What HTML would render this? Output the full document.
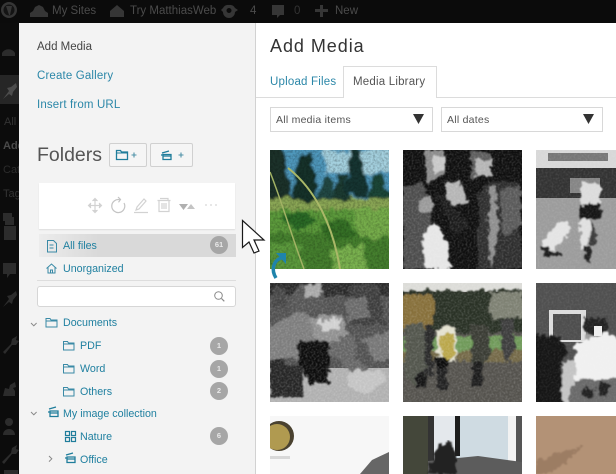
<!DOCTYPE html>
<html><head><meta charset="utf-8">
<style>
html,body{margin:0;padding:0;width:616px;height:474px;overflow:hidden;background:#fff}
body{position:relative;font-family:"Liberation Sans",sans-serif;font-size:11.5px;color:#0e7a9c}
.a{position:absolute;white-space:nowrap;line-height:14px}
.g{color:#444}
.l{font-size:10.7px;color:#2080a0}
.b{position:absolute;left:210px;width:18px;height:18px;border-radius:50%;background:#a6a6a6;color:#e8e8e8;font-size:7.5px;font-weight:bold;line-height:18px;text-align:center}
.d{color:#4c4c4c;font-size:11.5px}
svg{position:absolute;left:0;top:0}
</style></head><body>
<div style="position:absolute;left:0;top:0;width:616px;height:23px;background:#0b0b0b"></div>
<div style="position:absolute;left:0;top:23px;width:19px;height:451px;background:#0c0c0c"></div>
<div style="position:absolute;left:0;top:75px;width:19px;height:29px;background:#262626"></div>
<div style="position:absolute;left:19px;top:23px;width:236px;height:451px;background:#f3f3f3"></div>
<div style="position:absolute;left:255px;top:23px;width:1px;height:451px;background:#d2d2d2"></div>

<div class="a" style="left:52px;top:4px;color:#4b4b4b">My Sites</div>
<div class="a" style="left:130px;top:4px;color:#4b4b4b">Try MatthiasWeb</div>
<div class="a" style="left:250px;top:4px;color:#4b4b4b">4</div>
<div class="a" style="left:294px;top:4px;color:#333">0</div>
<div class="a" style="left:335px;top:4px;color:#4b4b4b">New</div>
<div class="a" style="left:4px;top:115px;color:#333;font-size:11px;width:15px;overflow:hidden">All</div>
<div class="a" style="left:3px;top:139px;color:#4a4a4a;font-size:11px;font-weight:bold;width:16px;overflow:hidden">Add</div>
<div class="a" style="left:3px;top:163px;color:#2c2c2c;font-size:11px;width:16px;overflow:hidden">Cat</div>
<div class="a" style="left:3px;top:187px;color:#333;font-size:11px;width:16px;overflow:hidden">Tag</div>

<div class="a g" style="left:37px;top:40px;width:auto">Add Media</div>
<div class="a" style="left:37px;top:69px;color:#2b87a8;letter-spacing:.15px">Create Gallery</div>
<div class="a" style="left:37px;top:98px;color:#2b87a8;letter-spacing:.15px">Insert from URL</div>
<div class="a" style="left:37px;top:144px;font-size:19.5px;line-height:22px;color:#555">Folders</div>

<div style="position:absolute;left:109px;top:143px;width:36px;height:22px;border:1px solid #d0d0d0;border-radius:2px;background:#f5f5f5"></div>
<div style="position:absolute;left:150px;top:143px;width:41px;height:22px;border:1px solid #d0d0d0;border-radius:2px;background:#f5f5f5"></div>
<div style="position:absolute;left:39px;top:183px;width:196px;height:46px;background:#fff;box-shadow:0 1px 1px #ddd"></div>
<div style="position:absolute;left:39px;top:234px;width:197px;height:23px;background:linear-gradient(90deg,#ececec 0,#d9d9d9 30%,#d9d9d9 100%)"></div>
<div style="position:absolute;left:37px;top:280px;width:199px;height:1px;background:#ddd"></div>
<div style="position:absolute;left:37px;top:286px;width:197px;height:19px;border:1px solid #d6d6d6;border-radius:3px;background:#fff"></div>

<div class="a l" style="left:63px;top:239px">All files</div>
<div class="a l" style="left:63px;top:262px">Unorganized</div>
<div class="a l" style="left:63px;top:316px">Documents</div>
<div class="a l" style="left:80px;top:339px">PDF</div>
<div class="a l" style="left:80px;top:362px">Word</div>
<div class="a l" style="left:80px;top:385px">Others</div>
<div class="a l" style="left:63px;top:407px">My image collection</div>
<div class="a l" style="left:80px;top:430px">Nature</div>
<div class="a l" style="left:80px;top:453px">Office</div>
<div class="b" style="top:236px">61</div>
<div class="b" style="top:337px">1</div>
<div class="b" style="top:360px">1</div>
<div class="b" style="top:382px">2</div>
<div class="b" style="top:427px">6</div>

<div class="a" style="left:270px;top:35px;font-size:18px;line-height:22px;color:#333;letter-spacing:.95px">Add Media</div>
<div style="position:absolute;left:256px;top:97px;width:360px;height:1px;background:#dcdcdc"></div>
<div style="position:absolute;left:343px;top:66px;width:94px;height:32px;background:#fff;border:1px solid #dcdcdc;border-bottom:none;box-sizing:border-box"></div>
<div class="a" style="left:270px;top:75px;color:#2b87a8;letter-spacing:.2px">Upload Files</div>
<div class="a" style="left:353px;top:75px;color:#555;letter-spacing:.2px">Media Library</div>
<div style="position:absolute;left:270px;top:107px;width:163px;height:25px;border:1px solid #d8d8d8;box-sizing:border-box"></div>
<div style="position:absolute;left:441px;top:107px;width:162px;height:25px;border:1px solid #d8d8d8;box-sizing:border-box"></div>
<div class="a d" style="left:276px;top:113px;font-size:10.5px;color:#555;letter-spacing:.25px">All media items</div>
<div class="a d" style="left:447px;top:113px;font-size:10.5px;color:#555;letter-spacing:.25px">All dates</div>

<svg width="616" height="474" viewBox="0 0 616 474" fill="none">
<defs>
<filter id="f1" x="-5%" y="-5%" width="110%" height="110%"><feTurbulence type="fractalNoise" baseFrequency=".16" numOctaves="3" seed="3" result="t"/><feDisplacementMap in="SourceGraphic" in2="t" scale="9" xChannelSelector="R" yChannelSelector="G"/><feGaussianBlur stdDeviation=".7"/></filter>
<filter id="f2" x="-5%" y="-5%" width="110%" height="110%"><feTurbulence type="fractalNoise" baseFrequency=".1" numOctaves="3" seed="6" result="t"/><feDisplacementMap in="SourceGraphic" in2="t" scale="12" xChannelSelector="R" yChannelSelector="G"/><feGaussianBlur stdDeviation="1"/></filter>
<filter id="n" x="0" y="0" width="100%" height="100%"><feTurbulence type="fractalNoise" baseFrequency=".45" numOctaves="2" seed="4"/><feColorMatrix values="0 0 0 0 0 0 0 0 0 0 0 0 0 0 0 1.8 0 0 0 -.65"/></filter>
<filter id="w" x="0" y="0" width="100%" height="100%"><feTurbulence type="fractalNoise" baseFrequency=".5" numOctaves="2" seed="9"/><feColorMatrix values="0 0 0 0 1 0 0 0 0 1 0 0 0 0 1 1.8 0 0 0 -.7"/></filter>
<clipPath id="c1"><rect x="270" y="150" width="119" height="119"/></clipPath>
<clipPath id="c2"><rect x="403" y="150" width="119" height="119"/></clipPath>
<clipPath id="c3"><rect x="536" y="150" width="80" height="119"/></clipPath>
<clipPath id="c4"><rect x="270" y="283" width="119" height="119"/></clipPath>
<clipPath id="c5"><rect x="403" y="283" width="119" height="119"/></clipPath>
<clipPath id="c6"><rect x="536" y="283" width="80" height="119"/></clipPath>
<clipPath id="c7"><rect x="270" y="416" width="119" height="58"/></clipPath>
<clipPath id="c8"><rect x="403" y="416" width="119" height="58"/></clipPath>
<clipPath id="c9"><rect x="536" y="416" width="80" height="58"/></clipPath>
</defs>

<!-- admin bar icons -->
<g fill="#363636">
<circle cx="9" cy="10" r="8"/><circle cx="9" cy="10" r="5.500" fill="#141414"/><path d="M6 6h6l-2 9h-1z"/>
<path d="M30 17v-4l3-2 2-4 4-2 4 2 2 4 3 2v4z"/>
<path d="M110 11l7-6 7 6v6h-14z"/>
<path d="M229 5a6 6 0 0 1 6 3l3 2-3 2a6 6 0 0 1-12 0l-2-2 2-2a6 6 0 0 1 6-3zm0 3a2.500 2.500 0 1 0 .01 0z" fill-rule="evenodd"/>
<path d="M272 5h12v10h-4l-3 3v-3h-5z"/>
<path d="M315 9h5V5h3v4h5v3h-5v5h-3v-5h-5z"/>
</g>
<g fill="#2c2c2c">
<path d="M2 53a7.500 7.500 0 0 1 13 0v3H2z"/>
<path d="M3 99l6-8-2-3 4-1 5-4 1 4-4 5-1 4-3-2z" fill="#4c4c4c"/>
<path d="M3 213h9v4h2v8H5v-4H3z"/>
<path d="M4 226h12v14H4z"/>
<path d="M3 263h13v11h-6l-3 4v-4H3z"/>
<path d="M3 307l6-8-2-3 4-1 5-4 1 4-4 5-1 4-3-2z"/>
<path d="M3 352l8-8 1-5 5-3-1 4 3 1-3 4h-4l-7 9z"/>
<path d="M3 396l2-8 4 1 1-4 5-3 1 5-3 1 2 3v5z"/>
<circle cx="9" cy="422" r="4"/><path d="M3 435c0-8 12-8 12 0z"/>
<path d="M2 462l9-9 1-5 5-3-1 4 3 1-3 4h-4l-8 10z"/>
<rect x="4" y="470" width="14" height="4"/>
</g>

<!-- Folder buttons icons -->
<g stroke="#1f7d9b" stroke-width="1.300">
<path d="M116.500 150.500h4l1 1.500h6v7.500h-11z"/><path d="M116.500 153h11" stroke-width="1"/>
<path d="M131.500 155h5M134 152.500v5" stroke-width="1.100" stroke="#4f92a8"/>
<path d="M162 153l7-2M161 155h2M163 154.500v5h8v-5z"/><path d="M163 156h8"/>
<path d="M178.500 155h5M181 152.500v5" stroke-width="1.100" stroke="#4f92a8"/>
</g>
<!-- toolbar icons -->
<g stroke="#d2d2d2" stroke-width="1.200">
<path d="M95 199v13M88.500 205.500h13"/>
<path d="M92.500 201l2.500-2.500 2.500 2.500M92.500 210l2.500 2.500 2.500-2.500M91 203l-2.500 2.500 2.500 2.500M99 203l2.500 2.500-2.500 2.500" fill="#d2d2d2"/>
<path d="M124 203a6.500 6.500 0 1 1-4-3.200" stroke="#c4c4c4"/><path d="M118 197l2.500 2.500-2 2.800" stroke="#c4c4c4"/>
<path d="M137 207l7-8 2 2-7 8-3 1zM134 212.500h14"/>
<path d="M157.500 200.500h13M160 198.500h8v2M159 200.500v11h10v-11M162 203v6M164 203v6M166 203v6"/>
</g>
<path d="M179 204h9l-4.500 6z" fill="#b0b0b0"/><path d="M187 209l4-5 4 5z" fill="#c4c4c4"/>
<g fill="#e0e0e0"><circle cx="206" cy="205" r="1"/><circle cx="211" cy="205" r="1"/><circle cx="216" cy="205" r="1"/></g>

<!-- list icons -->
<g stroke="#3a8aa6" stroke-width="1">
<path d="M47.500 240.500h6l3 3v8.500h-9z"/><path d="M49.500 245h4M49.500 248h4"/>
<path d="M46.500 268.500l5-4.500 5 4.500M48 267.500v5.500h7v-5.500M50.500 273v-3h2v3"/>
<path d="M31 323l2.800 2.800 2.800-2.800" stroke="#888"/>
<path d="M46 318.500h4l1 1.500h6v7h-11zM46 321h11"/>
<path d="M63.500 341.500h4l1 1.500h5.500v7h-10.500zM63.500 344h10.500"/>
<path d="M63.500 364.500h4l1 1.500h5.500v7h-10.500zM63.500 367h10.500"/>
<path d="M63.500 387.500h4l1 1.500h5.500v7h-10.500zM63.500 390h10.500"/>
<path d="M31 412l2.800 2.800 2.800-2.800" stroke="#888"/>
<path d="M49 409l7-2M48 412h2M50 411v5.500h8V411zM50 413h8" stroke-width="1.300" stroke="#1f7d9b"/>
<g stroke="#1f7d9b" stroke-width="1.200"><rect x="65.500" y="431.500" width="4" height="4"/><rect x="71.500" y="431.500" width="4" height="4"/><rect x="65.500" y="437.500" width="4" height="4"/><rect x="71.500" y="437.500" width="4" height="4"/></g>
<path d="M49 456l2.800 2.800-2.800 2.800" stroke="#888"/>
<path d="M66 455l7-2M65 458h2M67 457v5.500h8V457zM67 459h8" stroke-width="1.300" stroke="#1f7d9b"/>
</g>
<circle cx="218.500" cy="295.500" r="3.800" stroke="#8a8a8a" stroke-width="1"/><path d="M221.500 298.500l2.800 2.800" stroke="#8a8a8a" stroke-width="1.200"/>

<!-- select arrows -->
<path d="M413 114h11l-5.500 10z" fill="#333"/>
<path d="M583 114h11l-5.500 10z" fill="#333"/>

<!-- cursor -->
<path d="M242.500 220.500v27l6.500-5.500 5 11 5-2-5-11h10z" fill="#fff" stroke="#1a1a1a" stroke-width="1.200"/>

<!-- Photo 1 -->
<g clip-path="url(#c1)">
<rect x="270" y="150" width="119" height="119" fill="#5c9a3c"/>
<g filter="url(#f2)">
<rect x="260" y="140" width="140" height="58" fill="#4f98bc"/>
<rect x="325" y="150" width="70" height="22" fill="#a4d0de"/>
<rect x="260" y="198" width="140" height="12" fill="#8aa654"/>
<path d="M260 140h22l10 58h-32z" fill="#1d3229"/>
<path d="M292 200l7-48 12 0 8 48z" fill="#16302b"/>
<path d="M318 200l6-25 6 0 5 25z" fill="#234a45"/>
<path d="M332 200l7-26 6 0 6 26z" fill="#1a3a33"/>
<path d="M345 196l5-46 10 0 9 46z" fill="#143430"/>
<path d="M368 198l6-24 6 0 10 24z" fill="#1f4639"/>
<rect x="260" y="232" width="140" height="50" fill="#447f2e"/>
<path d="M282 215l22-4 14 12-22 8z" fill="#2c6a26"/>
<path d="M320 224l24-6 12 16-26 8z" fill="#356f28"/>
<path d="M350 208l40 0 4 30-34 0z" fill="#76ad4c"/>
<path d="M270 240l30 4 6 30-36 0z" fill="#5b9a3c"/>
<path d="M330 250l34-6 6 30-36 0z" fill="#7ab250"/>
</g>
<rect x="270" y="150" width="119" height="119" filter="url(#n)" opacity=".28"/>
<path d="M288 168c28 22 45 58 52 101" stroke="#aab868" stroke-width="2"/>
<path d="M270 172c12 30 22 65 34 97" stroke="#a2b264" stroke-width="1.500"/>
</g>
<path d="M276 278c-5-8-3-17 5-20" stroke="#1f84ab" stroke-width="3.500"/><path d="M276 253h10v11z" fill="#1f84ab"/>

<!-- Photo 2 -->
<g clip-path="url(#c2)">
<rect x="403" y="150" width="119" height="119" fill="#0f0f0f"/>
<g filter="url(#f1)">
<path d="M424 150h20l2 24-18 8z" fill="#8a8a8a"/>
<path d="M432 156l14 0 0 14-12 4z" fill="#c8c8c8"/>
<path d="M470 152h22l0 24-20 2z" fill="#5e5e5e"/>
<path d="M476 160h16v16h-16z" fill="#b5b5b5"/>
<path d="M403 186l20-4 8 36-6 51h-22z" fill="#4e4e4e"/>
<path d="M445 184l16-2 8 22-20 2z" fill="#b5b5b5"/>
<path d="M422 236l12-14 14 22 2 25h-24z" fill="#e6e6e6"/>
<path d="M478 196l10-14 32 0 2 87h-44z" fill="#2f2f2f"/>
<path d="M500 190l20-4 2 40-18 10z" fill="#5a5a5a"/>
<path d="M489 186l6 0 4 44-8 39-3-40z" fill="#8e8e8e"/>
<path d="M435 195l10 0 24 30-14 10z" fill="#1f1f1f"/>
<circle cx="427" cy="205" r="8" fill="#9a9a9a"/>
</g>
<rect x="403" y="150" width="119" height="119" filter="url(#w)" opacity=".2"/>
</g>

<!-- Photo 3 -->
<g clip-path="url(#c3)">
<rect x="536" y="150" width="80" height="119" fill="#9c9c9c"/>
<rect x="536" y="150" width="80" height="20" fill="#d8d8d8"/>
<rect x="548" y="153" width="60" height="8" fill="#777"/>
<rect x="536" y="168" width="80" height="30" fill="#333"/>
<rect x="570" y="178" width="30" height="15" fill="#858585"/>
<g filter="url(#f1)">
<path d="M540 245l20-24 8 2 2 12-20 18z" fill="#e4e4e4"/>
<path d="M579 205l22 0-1 14-21 0z" fill="#141414"/>
<path d="M582 183l18 0 0 22-20 0z" fill="#dcdcdc"/>
<path d="M580 220l10 0-3 30h-6z" fill="#e0e0e0"/>
<path d="M590 220l8 12-3 14-5-2z" fill="#3a3a3a"/>
<path d="M585 247l6 0 1 14h-7z" fill="#222"/>
<path d="M540 244l14 8 8 0 0 4-18 0z" fill="#1a1a1a"/>
</g>
<rect x="536" y="150" width="80" height="119" filter="url(#w)" opacity=".12"/>
</g>

<!-- Photo 4 -->
<g clip-path="url(#c4)">
<rect x="270" y="283" width="119" height="119" fill="#515151"/>
<rect x="270" y="368" width="119" height="34" fill="#b0b0b0"/>
<g filter="url(#f1)">
<rect x="262" y="280" width="135" height="16" fill="#2a2a2a"/>
<path d="M288 305l12-22 20 0 6 26-30 6z" fill="#555"/>
<path d="M305 284h16v12h-16z" fill="#a8a8a8"/>
<path d="M350 285l28 0 8 40-34 0z" fill="#3c3c3c"/>
<path d="M272 288h14v20h-14z" fill="#444"/>
<path d="M262 330l38-18 22 8 0 20-30 20-30 0z" fill="#7d7d7d"/>
<path d="M310 318l32-4 6 20-30 20z" fill="#909090"/>
<path d="M330 342l24-8 2 24 18 16-20 0-24-20z" fill="#666"/>
<path d="M298 340l30 0 2 44-20 0-12-20z" fill="#111"/>
<path d="M270 358l32 10 2 28-34 0z" fill="#252525"/>
<path d="M362 340l30-10 2 28-18 4z" fill="#767676"/>
<path d="M318 320l22-2 0 10-20 4z" fill="#d0d0d0"/>
<path d="M345 300l18-4 8 20-22 6z" fill="#6a6a6a"/>
<path d="M350 370l30 0 6 10-20 14-20-8z" fill="#c4c4c4"/>
</g>
<rect x="270" y="283" width="119" height="119" filter="url(#w)" opacity=".24"/>
</g>

<!-- Photo 5 -->
<g clip-path="url(#c5)">
<rect x="403" y="283" width="119" height="119" fill="#55534e"/>
<rect x="403" y="283" width="119" height="9" fill="#dcdcd8"/>
<g filter="url(#f1)">
<rect x="396" y="290" width="130" height="42" fill="#2a3028"/>
<rect x="398" y="295" width="35" height="36" fill="#87703a"/>
<rect x="490" y="292" width="34" height="26" fill="#7e8173"/>
<rect x="396" y="336" width="130" height="14" fill="#6f9a5a"/>
<rect x="396" y="350" width="130" height="12" fill="#756a48"/>
<path d="M405 325l14-3 8 12 0 50-14 0-8-10z" fill="#52564d"/>
<path d="M415 374l12 0 0 14-12 0z" fill="#151515"/>
<path d="M436 330l14-4 6 6 0 30-18 0z" fill="#e4e2d0"/>
<path d="M440 335l14-3 0 26-12 0z" fill="#baa74c"/>
<rect x="435" y="358" width="14" height="10" fill="#111"/>
<rect x="437" y="368" width="10" height="22" fill="#202020"/>
<path d="M470 325l18 0 4 30-8 8-12 0z" fill="#3a3e35"/>
<rect x="473" y="362" width="10" height="24" fill="#1c1c1c"/>
<path d="M500 320l14 0 0 30-6 14-6-12z" fill="#3e3e3e"/>
<rect x="425" y="325" width="8" height="50" fill="#2a2a2a"/>
</g>
<rect x="403" y="283" width="119" height="119" filter="url(#w)" opacity=".2"/>
</g>

<!-- Photo 6 -->
<g clip-path="url(#c6)">
<rect x="536" y="283" width="80" height="119" fill="#505050"/>
<rect x="549" y="310" width="37" height="32" fill="#ddd"/>
<rect x="553" y="314" width="28" height="26" fill="#4e4e4e"/>
<g filter="url(#f1)">
<path d="M532 335l28 2 8 18-8 8 2 42-30 0z" fill="#161616"/>
<path d="M562 362l22-4 6 46h-28z" fill="#c4c4c4"/>
<path d="M585 340c2-16 24-14 25 0l-2 10h-20z" fill="#a0a0a0"/>
<path d="M584 318h22v16h-22z" fill="#222"/>
<path d="M575 345l14-7 20-6 12 10v38h-46z" fill="#f0f0f0"/>
<path d="M575 380l46-2v28h-55z" fill="#6a6a6a"/>
<path d="M585 385l10 4-4 10-10-4zM600 380l10 6-4 12-10-6z" fill="#222"/>
</g>
<rect x="594" y="326" width="8" height="10" fill="#eee"/>
<rect x="536" y="283" width="80" height="119" filter="url(#w)" opacity=".1"/>
</g>

<!-- Photo 7 -->
<g clip-path="url(#c7)">
<rect x="270" y="416" width="119" height="58" fill="#f7f7f7"/>
<circle cx="279" cy="436" r="15" fill="#4a4230"/>
<circle cx="277" cy="437" r="13" fill="#b09a50"/>
<path d="M360 474l12-14 17-8v22z" fill="#666"/>
<path d="M270 456h20v3h-20z" fill="#d8d8d8"/>
</g>

<!-- Photo 8 -->
<g clip-path="url(#c8)">
<rect x="403" y="416" width="119" height="58" fill="#cfdbe2"/>
<rect x="428" y="416" width="6" height="45" fill="#333"/>
<rect x="434" y="416" width="21" height="45" fill="#e4e8ec"/>
<rect x="455" y="416" width="5" height="40" fill="#1d1d1d"/>
<rect x="508" y="416" width="8" height="45" fill="#f2f2f2"/>
<rect x="516" y="416" width="6" height="58" fill="#555"/>
<rect x="403" y="416" width="25" height="58" fill="#44473a"/>
<path d="M428 461l50-5 44 6v12h-94z" fill="#5c5c5c"/>
<path d="M428 474l10-28 12-4 6 14v18z" fill="#222" filter="url(#f1)"/>
</g>

<!-- Photo 9 -->
<g clip-path="url(#c9)">
<rect x="536" y="416" width="80" height="58" fill="#b39276"/>
<path d="M536 462l20-8 26-8-18 18-18 10h-10z" fill="#9c7d64" filter="url(#f1)"/>
</g>
</svg>
</body></html>
